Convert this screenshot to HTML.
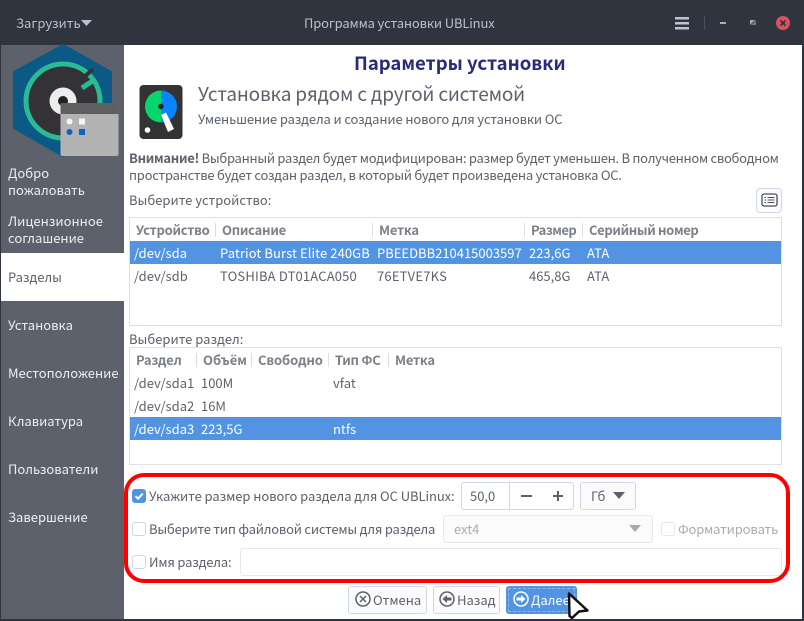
<!DOCTYPE html>
<html lang="ru"><head><meta charset="utf-8"><title>UBLinux</title>
<style>
html,body{margin:0;padding:0;background:#fff}
body{width:804px;height:621px;position:relative;overflow:hidden;font-family:"Noto Sans CJK SC","Liberation Sans",sans-serif;font-size:13px;color:#5c616c}
.a{position:absolute}
.t{position:absolute;white-space:nowrap;line-height:18px}
.th{font-weight:700;color:#7c8088;letter-spacing:-.25px}
.w{color:#fff}
.box{position:absolute;box-sizing:border-box;border:1px solid #cfd6e6;border-radius:3px;background:#fbfbfc}
.dis{border-color:#e6e8ee;background:#fbfbfb}
.sep{position:absolute;width:1px;height:14px;background:#dcdfe3}
.cb{position:absolute;box-sizing:border-box;width:14px;height:14px;border:1px solid #cfd6e6;border-radius:3px;background:#fff}
.nav{color:#eceef0}
.r{letter-spacing:.09px}
</style></head><body>
<div class="a" style="left:0;top:0;width:804px;height:621px;background:#2f343f"></div>
<div class="a" style="left:1px;top:45px;width:123px;height:574px;background:#5c616c"></div>
<div class="a" style="left:124px;top:45px;width:678px;height:574px;background:#fff"></div>
<div class="a" style="left:1px;top:253px;width:123px;height:48px;background:#fff"></div>

<div class="t" style="left:16px;top:14px;color:#bac0cb">Загрузить</div>
<svg class="a" style="left:0;top:0" width="804" height="45">
<path d="M81 20h11l-5.500 6z" fill="#bac0cb"/>
<rect x="675" y="17" width="14" height="2.500" fill="#bac3d2"/><rect x="675" y="22" width="14" height="2.500" fill="#bac3d2"/><rect x="675" y="27" width="14" height="2.500" fill="#bac3d2"/>
<rect x="704" y="16" width="1" height="14" fill="#4a505c"/>
<rect x="720" y="22" width="6" height="2" fill="#a9b0bd"/>
<path d="M750 20h5l-5 5z" fill="#a9a9a9"/><path d="M756 20v5h-5z" fill="#77797e"/>
<circle cx="783" cy="23" r="7" fill="#d9515d"/>
<path d="M780.500 20.500l5 5m0-5l-5 5" stroke="#2f343f" stroke-width="1.700"/>
</svg>
<div class="t" style="left:304px;top:14px;color:#bac0cb;letter-spacing:-.15px">Программа установки UBLinux</div>

<svg class="a" style="left:0;top:40px" width="124" height="120" viewBox="0 40 124 120">
<path d="M63 45L111 72V128L63 156L14 128V72Z" fill="#0b5a85" stroke="#0b5a85" stroke-width="2" stroke-linejoin="round"/>
<circle cx="63" cy="101" r="37" fill="#343236" stroke="#2abb94" stroke-width="5"/>
<path d="M81 80L93 69" stroke="#343236" stroke-width="4"/>
<path d="M82 88L94 80" stroke="#2abb94" stroke-width="5"/>
<circle cx="63" cy="101" r="13.500" fill="#ededed"/>
<circle cx="63" cy="101" r="5" fill="#222"/>
<rect x="60.500" y="103" width="58" height="53" rx="2" fill="#b3b3b3"/>
<path d="M60.500 114V105a2 2 0 0 1 2-2h54a2 2 0 0 1 2 2v9z" fill="#5f5f5f"/>
<circle cx="69.500" cy="121.500" r="3" fill="#f4f4f4"/><rect x="79" y="118.500" width="6" height="6" fill="#f4f4f4"/>
<circle cx="69.500" cy="132" r="3" fill="#0a66c2"/><rect x="79" y="129" width="6" height="6" fill="#0a66c2"/>
</svg>

<div class="t nav" style="left:8px;top:164px">Добро</div>
<div class="t nav" style="left:8px;top:181px">пожаловать</div>
<div class="t nav" style="left:8px;top:212px">Лицензионное</div>
<div class="t nav" style="left:8px;top:229px">соглашение</div>
<div class="t" style="left:8px;top:268px">Разделы</div>
<div class="t nav" style="left:8px;top:316px">Установка</div>
<div class="t nav" style="left:8px;top:364px">Местоположение</div>
<div class="t nav" style="left:8px;top:412px">Клавиатура</div>
<div class="t nav" style="left:8px;top:460px">Пользователи</div>
<div class="t nav" style="left:8px;top:508px">Завершение</div>

<div class="t" style="left:354px;top:51px;line-height:24px;font-size:18.500px;font-weight:700;color:#2a2a7c">Параметры установки</div>
<svg class="a" style="left:139px;top:85px" width="44" height="54" viewBox="139 85 44 54">
<rect x="139.500" y="85" width="43" height="54" rx="4" fill="#333"/>
<path d="M161 90.500a16 16 0 0 0 0 32z" fill="#06d66e"/>
<path d="M161 90.500a16 16 0 0 1 0 32z" fill="#0a84ff"/>
<circle cx="161" cy="106.500" r="2.800" fill="#2a2a2a"/>
<path d="M161 115L166 112.500L174 129L168 132Z" fill="#fff"/>
<circle cx="147.500" cy="130" r="2.800" fill="#fff"/>
</svg>
<div class="t" style="left:198px;top:81px;line-height:26px;font-size:19px;letter-spacing:-.18px">Установка рядом с другой системой</div>
<div class="t" style="left:198px;top:110px;letter-spacing:-.13px">Уменьшение раздела и создание нового для установки ОС</div>
<div class="t" style="left:129px;top:149px;letter-spacing:-.29px"><b>Внимание!</b> Выбранный раздел будет модифицирован: размер будет уменьшен. В полученном свободном</div>
<div class="t" style="left:129px;top:166px;letter-spacing:-.24px">пространстве будет создан раздел, в который будет произведена установка ОС.</div>
<div class="t" style="left:129px;top:191px">Выберите устройство:</div>

<div class="box" style="left:756px;top:188px;width:26px;height:25px;border-radius:4px"></div>
<svg class="a" style="left:761px;top:193px" width="17" height="14"><rect x="1" y="1" width="15" height="12" rx="2" fill="none" stroke="#4b5059" stroke-width="1.300"/><path d="M3.500 4.500h1.500M6.500 4.500h7M3.500 7h1.500M6.500 7h7M3.500 9.500h1.500M6.500 9.500h7" stroke="#4b5059" stroke-width="1"/></svg>

<div class="a" style="left:129px;top:217px;width:653px;height:109px;box-sizing:border-box;border:1px solid #dcdfe3"></div>
<div class="a" style="left:130px;top:241px;width:651px;height:23px;background:#5294e2"></div>
<div class="t th" style="left:136px;top:221px">Устройство</div>
<div class="sep" style="left:215px;top:223px"></div>
<div class="t th" style="left:222px;top:221px">Описание</div>
<div class="sep" style="left:372px;top:223px"></div>
<div class="t th" style="left:379px;top:221px">Метка</div>
<div class="sep" style="left:524px;top:223px"></div>
<div class="t th" style="left:531px;top:221px;letter-spacing:-.5px">Размер</div>
<div class="sep" style="left:582px;top:223px"></div>
<div class="t th" style="left:589px;top:221px;letter-spacing:-.35px">Серийный номер</div>
<div class="t w" style="left:134px;top:244px">/dev/sda</div>
<div class="t w r" style="left:220px;top:244px">Patriot Burst Elite 240GB</div>
<div class="t w" style="left:377px;top:244px">PBEEDBB210415003597</div>
<div class="t w" style="left:529px;top:244px">223,6G</div>
<div class="t w" style="left:587px;top:244px">ATA</div>
<div class="t" style="left:134px;top:267px">/dev/sdb</div>
<div class="t" style="left:220px;top:267px;letter-spacing:.17px">TOSHIBA DT01ACA050</div>
<div class="t" style="left:377px;top:267px;letter-spacing:.2px">76ETVE7KS</div>
<div class="t" style="left:529px;top:267px">465,8G</div>
<div class="t" style="left:587px;top:267px">ATA</div>

<div class="t" style="left:129px;top:330px">Выберите раздел:</div>
<div class="a" style="left:129px;top:347px;width:653px;height:118px;box-sizing:border-box;border:1px solid #dcdfe3"></div>
<div class="a" style="left:130px;top:417px;width:651px;height:23px;background:#5294e2"></div>
<div class="t th" style="left:136px;top:351px">Раздел</div>
<div class="sep" style="left:196px;top:353px"></div>
<div class="t th" style="left:203px;top:351px;letter-spacing:0">Объём</div>
<div class="sep" style="left:251px;top:353px"></div>
<div class="t th" style="left:258px;top:351px;letter-spacing:-.12px">Свободно</div>
<div class="sep" style="left:328px;top:353px"></div>
<div class="t th" style="left:335px;top:351px">Тип ФС</div>
<div class="sep" style="left:388px;top:353px"></div>
<div class="t th" style="left:395px;top:351px">Метка</div>
<div class="t" style="left:134px;top:374px">/dev/sda1</div><div class="t" style="left:201px;top:374px">100M</div><div class="t" style="left:333px;top:374px">vfat</div>
<div class="t" style="left:134px;top:397px">/dev/sda2</div><div class="t" style="left:201px;top:397px">16M</div>
<div class="t w" style="left:134px;top:420px">/dev/sda3</div><div class="t w" style="left:201px;top:420px">223,5G</div><div class="t w" style="left:333px;top:420px">ntfs</div>

<div class="cb" style="left:132px;top:489px;background:#5294e2;border-color:#5294e2"></div>
<svg class="a" style="left:132px;top:489px" width="14" height="14"><path d="M3.500 7.200L6 9.700L10.800 4.500" fill="none" stroke="#fff" stroke-width="2"/></svg>
<div class="t" style="left:149px;top:487px;letter-spacing:-.07px">Укажите размер нового раздела для ОС UBLinux:</div>
<div class="box" style="left:461px;top:482px;width:113px;height:28px;background:#fff"></div>
<div class="a" style="left:509px;top:483px;width:1px;height:26px;background:#cfd6e6"></div>
<div class="t" style="left:470px;top:487px">50,0</div>
<svg class="a" style="left:515px;top:488px" width="60" height="16"><path d="M6 8h11" stroke="#5c616c" stroke-width="2"/><path d="M38 8h10M43 3v10" stroke="#5c616c" stroke-width="2"/></svg>
<div class="box" style="left:580px;top:482px;width:56px;height:28px"></div>
<div class="t" style="left:591px;top:487px">Гб</div>
<svg class="a" style="left:612px;top:491px" width="14" height="10"><path d="M1 1h12l-6 7z" fill="#5c616c"/></svg>

<div class="cb" style="left:132px;top:522px"></div>
<div class="t" style="left:149px;top:520px;letter-spacing:-.21px">Выберите тип файловой системы для раздела</div>
<div class="box dis" style="left:443px;top:515px;width:210px;height:28px"></div>
<div class="t" style="left:454px;top:520px;color:#a9abb0">ext4</div>
<svg class="a" style="left:628px;top:524px" width="14" height="10"><path d="M1 1h12l-6 7z" fill="#a9abb0"/></svg>
<div class="cb" style="left:661px;top:522px;border-color:#e6e8ee"></div>
<div class="t" style="left:678px;top:520px;color:#a9abb0;letter-spacing:-.15px">Форматировать</div>

<div class="cb" style="left:132px;top:555px"></div>
<div class="t" style="left:149px;top:553px;letter-spacing:-.17px">Имя раздела:</div>
<div class="box dis" style="left:240px;top:548px;width:542px;height:28px;background:#fff"></div>

<div class="a" style="left:124px;top:473px;width:666px;height:110px;box-sizing:border-box;border:4px solid #f00;border-radius:20px"></div>

<div class="box" style="left:348px;top:586px;width:79px;height:28px"></div>
<svg class="a" style="left:354px;top:590px" width="18" height="18"><circle cx="9" cy="9" r="7" fill="none" stroke="#5c616c" stroke-width="1.500"/><path d="M6 6l6 6m0-6l-6 6" stroke="#5c616c" stroke-width="1.500"/></svg>
<div class="t" style="left:373px;top:591px">Отмена</div>
<div class="box" style="left:433px;top:586px;width:67px;height:28px"></div>
<svg class="a" style="left:438px;top:590px" width="18" height="18"><circle cx="9" cy="9" r="7" fill="none" stroke="#5c616c" stroke-width="1.500"/><path d="M4.500 9L9 5v2.500h4.500v3H9V13z" fill="#5c616c"/></svg>
<div class="t" style="left:457px;top:591px">Назад</div>
<div class="a" style="left:506px;top:586px;width:71px;height:28px;background:#5294e2;border-radius:3px"></div>
<div class="a" style="left:508px;top:588px;width:67px;height:24px;box-sizing:border-box;border:1px dashed #8fbaed"></div>
<svg class="a" style="left:512px;top:590px" width="18" height="18"><circle cx="9" cy="9" r="7" fill="none" stroke="#fff" stroke-width="1.500"/><path d="M13.500 9L9 5v2.500H4.500v3H9V13z" fill="#fff"/></svg>
<div class="t w" style="left:531px;top:591px">Далее</div>
<svg class="a" style="left:565px;top:590px" width="26" height="31"><path d="M4 3.500L22.500 20.500L14 21.500L7 28L4.500 26Z" fill="#fff" stroke="#111" stroke-width="2.500" stroke-linejoin="round"/></svg>
</body></html>
